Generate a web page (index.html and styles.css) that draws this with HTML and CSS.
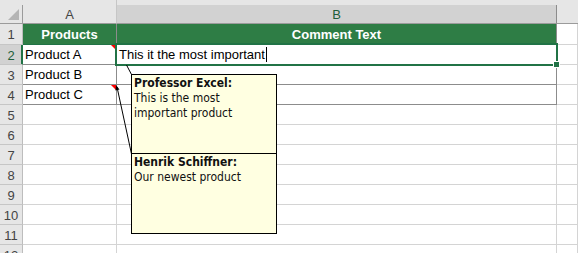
FILE: index.html
```html
<html>
	<head>
		<meta charset="UTF-8">
		<title>Comments</title>
		<link rel="stylesheet" href="styles.css">
	</head>
	<body>
		<div class="sheet">
			<div class="strip"></div>
			<div class="grid">
				<div class="corner"><span class="tri"></span></div>
				<div class="colhead">A</div>
				<div class="colhead sel">B</div>
				<div class="colhead last"></div>

				<div class="rowhead">1</div>
				<div class="cell th">Products</div>
				<div class="cell th">Comment Text</div>
				<div class="cell"></div>

				<div class="rowhead sel">2</div>
				<div class="cell tb note">Product A</div>
				<div class="cell tb">This it the most important<span class="caret"></span></div>
				<div class="cell"></div>

				<div class="rowhead">3</div>
				<div class="cell tb">Product B</div>
				<div class="cell tb"></div>
				<div class="cell"></div>

				<div class="rowhead">4</div>
				<div class="cell tb note">Product C</div>
				<div class="cell tb"></div>
				<div class="cell"></div>

				<div class="rowhead">5</div><div class="cell"></div><div class="cell"></div><div class="cell"></div>
				<div class="rowhead">6</div><div class="cell"></div><div class="cell"></div><div class="cell"></div>
				<div class="rowhead">7</div><div class="cell"></div><div class="cell"></div><div class="cell"></div>
				<div class="rowhead">8</div><div class="cell"></div><div class="cell"></div><div class="cell"></div>
				<div class="rowhead">9</div><div class="cell"></div><div class="cell"></div><div class="cell"></div>
				<div class="rowhead">10</div><div class="cell"></div><div class="cell"></div><div class="cell"></div>
				<div class="rowhead">11</div><div class="cell"></div><div class="cell"></div><div class="cell"></div>
				<div class="rowhead">12</div><div class="cell"></div><div class="cell"></div><div class="cell"></div>
			</div>

			<div class="selection"><span class="handle"></span></div>

			<svg class="links" width="578" height="253">
				<line x1="126.5" y1="65" x2="131.5" y2="74.5" stroke="#000" stroke-width="1"/>
				<line x1="117" y1="87" x2="131.5" y2="154" stroke="#000" stroke-width="1"/>
				<polygon points="116,85 119.5,89.5 115.5,90.5" fill="#000"/>
			</svg>

			<div class="comment c1">
				<b>Professor Excel:</b><br>
				This is the most<br>
				important product
			</div>
			<div class="comment c2">
				<b>Henrik Schiffner:</b><br>
				Our newest product
			</div>
		</div>
	</body>
</html>
```

FILE: styles.css
```css
body {
	margin: 0;
	overflow: hidden;
	background: #fff;
}
.sheet {
	position: relative;
	width: 578px;
	height: 253px;
	overflow: hidden;
	font-family: "Liberation Sans", Arial, sans-serif;
	font-size: 13px;
}
.strip {
	height: 5px;
	background: #e6e6e6;
}
.grid {
	display: grid;
	grid-template-columns: 23px 94px 440px 1fr;
	grid-template-rows: 19px 21px repeat(11, 20px);
}
.grid > div {
	box-sizing: border-box;
}
.corner, .colhead, .rowhead {
	background: #e6e6e6;
	color: #444;
	border-right: 1px solid #c6c6c6;
	border-bottom: 1px solid #c6c6c6;
	display: flex;
	align-items: center;
	justify-content: center;
}
.corner {
	position: relative;
	border-right-color: #9b9b9b;
	border-bottom-color: #9b9b9b;
}
.tri {
	position: absolute;
	right: 3px;
	bottom: 3px;
	width: 0;
	height: 0;
	border-left: 11px solid transparent;
	border-bottom: 11px solid #b4b4b4;
}
.colhead {
	border-bottom-color: #9b9b9b;
	margin-top: -5px;
	height: 24px;
	padding-top: 5px;
}
.colhead.sel {
	background: #d2d2d2;
	color: #1e5f3a;
	margin-top: 0;
	height: 19px;
	padding-top: 0;
	border-right-color: #8c8c8c;
}
.colhead.last {
	border-right: none;
}
.rowhead {
	border-right-color: #bdbdbd;
	padding-top: 1px;
}
.rowhead.sel {
	background: #d2d2d2;
	color: #1e5f3a;
	box-shadow: inset -1px 0 0 #217346;
	border-right-color: #217346;
}
.cell {
	position: relative;
	border-right: 1px solid #d4d4d4;
	border-bottom: 1px solid #d4d4d4;
	padding: 0 2px;
	display: flex;
	align-items: center;
	white-space: nowrap;
	color: #000;
}
.th {
	background: #2e7d45;
	color: #fff;
	font-weight: bold;
	justify-content: center;
	border-right-color: #8c8c8c;
	border-bottom-color: #217346;
}
.tb {
	border-right-color: #8c8c8c;
	border-bottom-color: #8c8c8c;
}
.note::after {
	content: "";
	position: absolute;
	top: 0;
	right: 0;
	width: 0;
	height: 0;
	border-left: 5px solid transparent;
	border-top: 5px solid #ff0000;
}
.caret {
	display: inline-block;
	width: 0;
	height: 15px;
	border-left: 1px solid #000;
	margin-left: 1px;
}
.selection {
	position: absolute;
	left: 115px;
	top: 43px;
	width: 443px;
	height: 23px;
	box-sizing: border-box;
	border: 2px solid #217346;
}
.handle {
	position: absolute;
	right: -4px;
	bottom: -4px;
	width: 5px;
	height: 5px;
	background: #217346;
	border: 1px solid #fff;
}
.links {
	position: absolute;
	left: 0;
	top: 0;
}
.comment {
	position: absolute;
	left: 131px;
	width: 146px;
	height: 81px;
	box-sizing: border-box;
	border: 1px solid #000;
	background: #ffffe1;
	padding: 1px 2px 0;
	font-family: "DejaVu Sans Condensed", "DejaVu Sans", sans-serif;
	font-stretch: condensed;
	font-size: 12px;
	line-height: 15px;
	color: #111;
}
.c1 {
	top: 74px;
}
.c2 {
	top: 153px;
}
```
